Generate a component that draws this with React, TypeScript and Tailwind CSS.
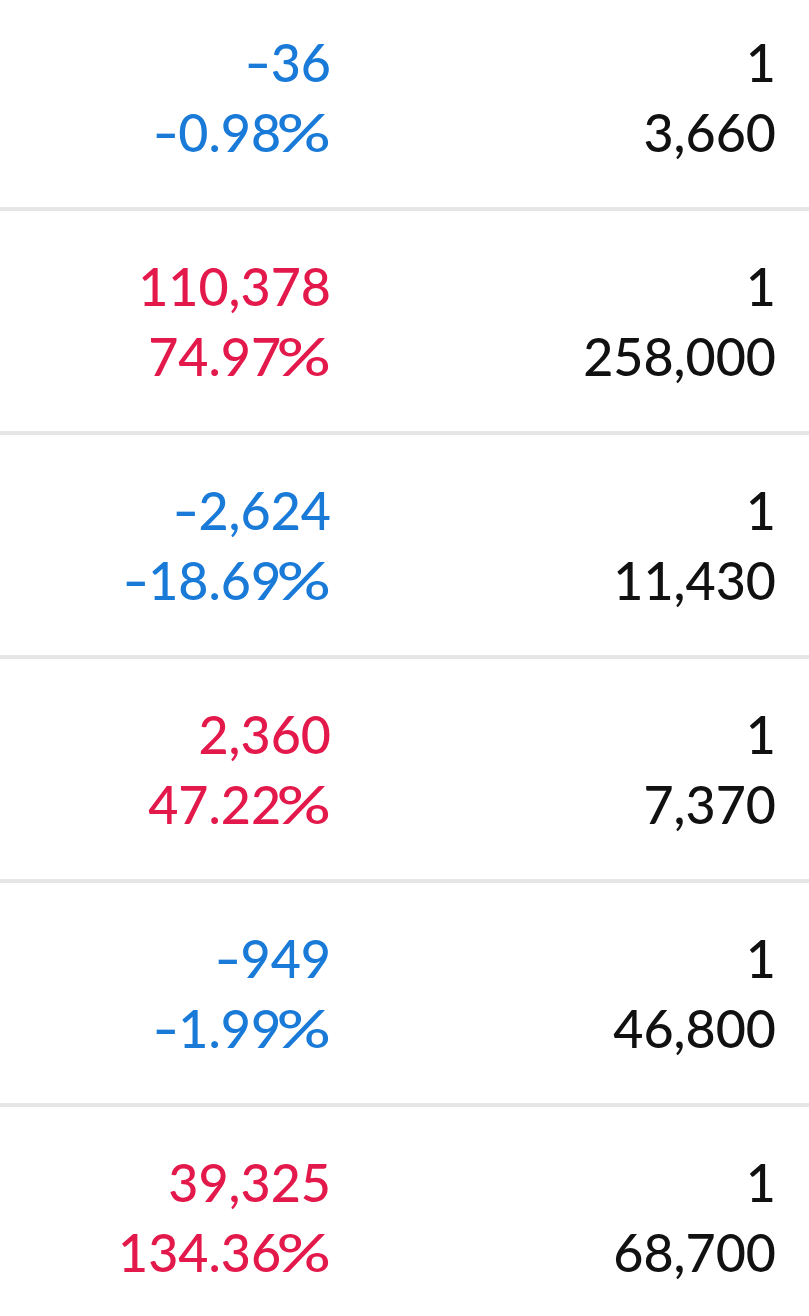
const rows = [
  { diff: '-36', rate: '-0.98', qty: '1', price: '3,660', up: false },
  { diff: '110,378', rate: '74.97', qty: '1', price: '258,000', up: true },
  { diff: '-2,624', rate: '-18.69', qty: '1', price: '11,430', up: false },
  { diff: '2,360', rate: '47.22', qty: '1', price: '7,370', up: true },
  { diff: '-949', rate: '-1.99', qty: '1', price: '46,800', up: false },
  { diff: '39,325', rate: '134.36', qty: '1', price: '68,700', up: true },
];

// the app's minus sign and percent sign are wider than Lato's glyphs
function Signed({ value }: { value: string }) {
  if (!value.startsWith('-')) return <>{value}</>;
  return (
    <>
      <span className="mx-[3px] inline-block scale-x-[1.4]">-</span>
      {value.slice(1)}
    </>
  );
}

export default function App() {
  return (
    <div className="h-[1316px] w-[809px] overflow-hidden bg-white" style={{ fontFamily: 'Lato, "Noto Sans", sans-serif' }}>
      <div className="-mt-[13px]">
        {rows.map((r, i) => (
          <div key={i} className="flex border-b-4 border-[#e6e6e6] py-[40px] text-[52px] font-medium leading-[70px]">
            {/* change column */}
            <div className={`w-[331px] text-right ${r.up ? 'text-[#e3194b]' : 'text-[#1a7ad8]'}`}>
              <div>
                <Signed value={r.diff} />
              </div>
              <div>
                <Signed value={r.rate} />
                <span className="ml-[8px] inline-block origin-right scale-x-[1.3]">%</span>
              </div>
            </div>
            {/* qty / price */}
            <div className="flex-1 pr-[33px] text-right text-[#111111]">
              <div>{r.qty}</div>
              <div>{r.price}</div>
            </div>
          </div>
        ))}
      </div>
    </div>
  );
}
